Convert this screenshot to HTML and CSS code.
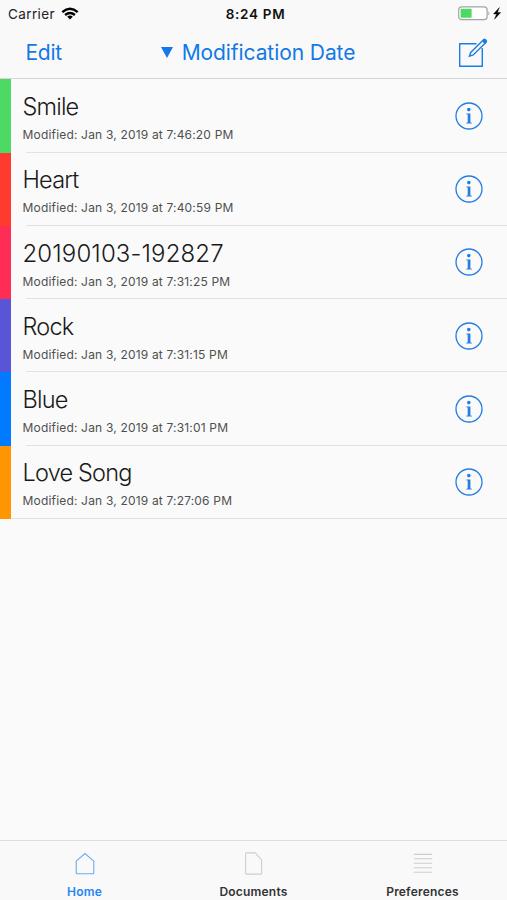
FILE: index.html
```html
<!DOCTYPE html>
<html lang="en">
<head>
<meta charset="utf-8">
<title>Documents</title>
<link rel="stylesheet" href="styles.css">
</head>
<body>
<svg class="defs" width="0" height="0" aria-hidden="true">
  <symbol id="info" viewBox="0 0 28 28">
    <circle cx="14" cy="14" r="13" fill="none" stroke="currentColor" stroke-width="1.3"/>
    <circle cx="13.8" cy="7.6" r="1.8" fill="currentColor"/>
    <path d="M11.3 11.4H15.4V20.4L16.9 20.8V21.6H11.3V20.8L12.7 20.4V12.6L11.3 12.2Z" fill="currentColor"/>
  </symbol>
</svg>
<div class="screen">
  <header class="top">
    <div class="status">
      <div class="carrier"><span>Carrier</span>
        <svg width="18" height="13" viewBox="0 0 18 13" fill="none" stroke="#000" stroke-width="2.4"><path d="M1.3 5.1Q9 -1.6 16.7 5.1"/><path d="M4.1 8Q9 3.8 13.9 8"/><path d="M9 12.6L6.2 9.8Q9 7.4 11.8 9.8Z" fill="#000" stroke="none"/></svg>
      </div>
      <div class="clock">8:24 PM</div>
      <svg class="battery" width="44" height="15" viewBox="0 0 44 15"><rect x=".7" y=".9" width="28.4" height="12.8" rx="3" fill="#fff" stroke="#a3a3a3" stroke-width="1.2"/><rect x="2.6" y="2.8" width="11" height="9" rx=".8" fill="#4cd964"/><path d="M30.4 5.2Q32.4 7.3 30.4 9.4Z" fill="#a3a3a3"/><path d="M41.3 1.6L35.5 8H38.6L36.5 13.2L42.7 6.4H39.4Z" fill="#000" stroke="#000" stroke-width=".4"/></svg>
    </div>
    <nav class="bar">
      <span class="edit">Edit</span>
      <span class="sort"><svg width="12" height="11" viewBox="0 0 12 11"><path d="M0 0H12L6 11Z" fill="#1279e6"/></svg><span>Modification Date</span></span>
      <svg class="compose" width="30" height="30" viewBox="0 0 30 30" fill="none" stroke="#1d7ce5" stroke-width="1.4"><path d="M18.5 5.7H1.7V28.3H24.3V10"/><path d="M11.4 18.2L12.7 14.5L25.5 1.7Q26.7 .9 27.8 1.9Q29 3 28.1 4.2L15.2 16.9Z"/><path d="M25.5 1.7Q26.7 .9 27.8 1.9Q29 3 28.1 4.2L26.8 5.5L24.2 3Z" fill="#1d7ce5" stroke-width="1"/></svg>
    </nav>
  </header>
  <main class="list">
    <article class="row green"><div class="cell"><div class="text"><h2>Smile</h2><p>Modified: Jan 3, 2019 at 7:46:20 PM</p></div><svg class="info"><use href="#info"/></svg></div></article>
    <article class="row red"><div class="cell"><div class="text"><h2>Heart</h2><p>Modified: Jan 3, 2019 at 7:40:59 PM</p></div><svg class="info"><use href="#info"/></svg></div></article>
    <article class="row pink"><div class="cell"><div class="text"><h2 class="digits">20190103-192827</h2><p>Modified: Jan 3, 2019 at 7:31:25 PM</p></div><svg class="info"><use href="#info"/></svg></div></article>
    <article class="row purple"><div class="cell"><div class="text"><h2>Rock</h2><p>Modified: Jan 3, 2019 at 7:31:15 PM</p></div><svg class="info"><use href="#info"/></svg></div></article>
    <article class="row blue"><div class="cell"><div class="text"><h2>Blue</h2><p>Modified: Jan 3, 2019 at 7:31:01 PM</p></div><svg class="info"><use href="#info"/></svg></div></article>
    <article class="row orange"><div class="cell"><div class="text"><h2>Love Song</h2><p>Modified: Jan 3, 2019 at 7:27:06 PM</p></div><svg class="info"><use href="#info"/></svg></div></article>
  </main>
  <footer class="tabs">
    <div class="tab active"><svg width="20" height="24" viewBox="0 0 20 24" fill="none" stroke="#69aaf0" stroke-width="1.1"><path d="M1.2 9.2L10 1.5L18.8 9.2V21Q18.8 21.8 18 21.8H2Q1.2 21.8 1.2 21Z"/></svg><span>Home</span></div>
    <div class="tab"><svg width="20" height="24" viewBox="0 0 20 24" fill="none" stroke="#cecece" stroke-width="1.1"><path d="M2.4 .9H11.2L17.6 8V21.3Q17.6 22.1 16.8 22.1H2.4Q1.6 22.1 1.6 21.3V1.7Q1.6 .9 2.4 .9Z"/></svg><span>Documents</span></div>
    <div class="tab"><svg width="20" height="24" viewBox="0 0 20 24" fill="none" stroke="#cecece" stroke-width="1.1"><path d="M.8 2.4H19.2M.8 6.8H19.2M.8 11.3H19.2M.8 15.7H19.2M.8 20.2H19.2"/></svg><span>Preferences</span></div>
  </footer>
</div>
</body>
</html>
```
FILE: styles.css
```css
* { box-sizing: border-box; }
body { margin: 0; font-family: Inter, "Liberation Sans", sans-serif; background: #fafafa; color: #222; }
svg { display: block; flex: none; }
.defs { position: absolute; }
.screen { width: 507px; height: 900px; display: flex; flex-direction: column; overflow: hidden; }
.top { height: 79.4px; flex: none; background: #f9f9f9; border-bottom: 1.4px solid #d6d6d6; }
.status { height: 27px; display: grid; grid-template-columns: 1fr auto 1fr; align-items: center; padding: 0 4px 0 8px; }
.carrier { display: flex; align-items: center; gap: 6px; font-size: 13.5px; letter-spacing: .38px; }
.clock { font-size: 13.5px; font-weight: 600; color: #111; letter-spacing: .7px; }
.battery { justify-self: end; margin-right: 1px; }
.bar { height: 51px; display: grid; grid-template-columns: 1fr auto 1fr; align-items: center; padding: 0 19px 0 25px; color: #1279e6; font-size: 21px; }
.edit { letter-spacing: -.3px; padding-left: .5px; }
.sort { display: flex; align-items: center; gap: 9px; letter-spacing: -.08px; margin-left: 3px; }
.compose { justify-self: end; }
.row { height: 73.25px; display: flex; border-left: 11px solid; }
.cell { flex: 1; display: flex; justify-content: space-between; margin-left: 15px; padding-right: 24px; border-bottom: 1px solid #e2e2e2; }
.row:last-child .cell { margin-left: 0; }
.row:last-child .text { margin-left: 11.5px; }
.text { margin-left: -3.5px; padding-top: 12.7px; }
h2 { margin: 0; font-size: 23.5px; line-height: 30px; font-weight: 300; letter-spacing: -.8px; color: #1a1a1a; }
.digits { font-size: 24px; letter-spacing: .12px; }
p { margin: 5px 0 0; font-size: 12px; line-height: 16px; letter-spacing: .18px; color: #505050; }
.info { width: 28px; height: 28px; margin-top: 22.5px; color: #227ee2; }
.green { border-left-color: #4cd964; }
.red { border-left-color: #ff3b30; }
.pink { border-left-color: #ff2d55; }
.purple { border-left-color: #5856d6; }
.blue { border-left-color: #007aff; }
.orange { border-left-color: #ff9500; }
.tabs { height: 60px; margin-top: auto; display: grid; grid-template-columns: repeat(3, 1fr); border-top: 1px solid #dedede; background: #f9f9f9; }
.tab { display: flex; flex-direction: column; align-items: center; padding-top: 11px; font-size: 12px; font-weight: 600; line-height: 16px; letter-spacing: .2px; color: #333; }
.tab span { margin-top: 8px; }
.active { color: #2586f3; }
```
